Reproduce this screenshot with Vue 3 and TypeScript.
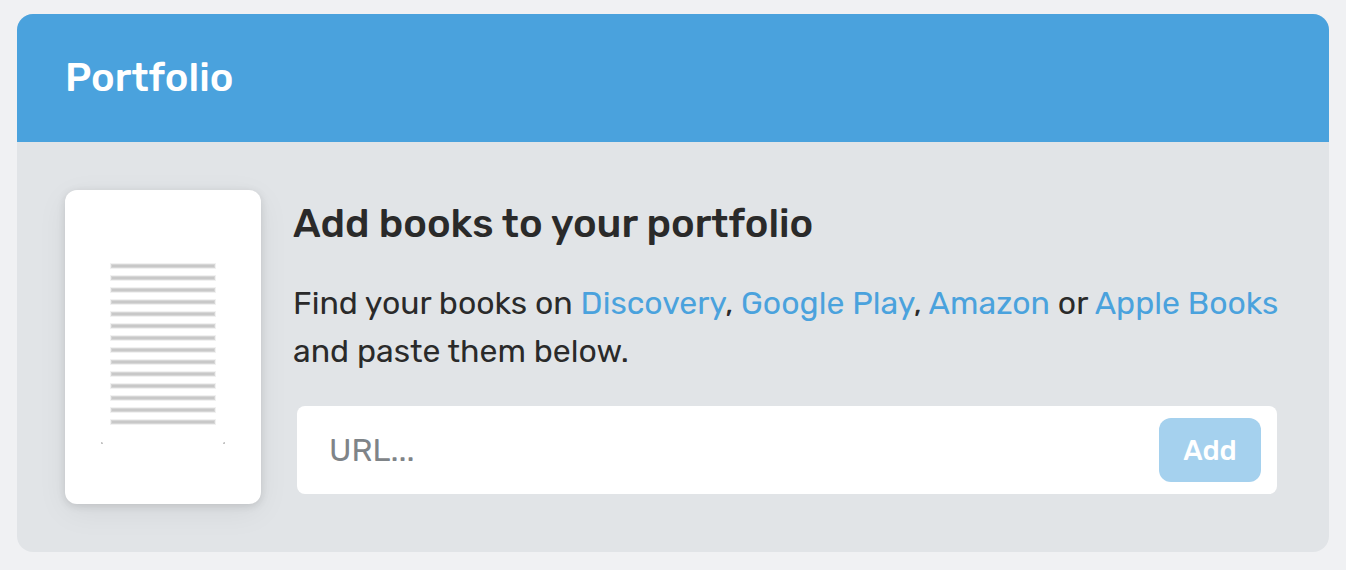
<script setup lang="ts">
import { ref } from 'vue'

const url = ref('')
const lines = Array.from({ length: 14 }, (_, i) => 74 + i * 12)
</script>

<template>
  <main class="page">
    <section class="card">
      <header class="card-header"><h1>Portfolio</h1></header>
      <div class="card-body">
        <svg class="book" viewBox="0 0 196 314" aria-hidden="true">
          <g v-for="y in lines" :key="y">
            <rect x="45" :y="y - 1" width="106" height="6" fill="#f1f1f1" />
            <rect x="46" :y="y" width="104" height="4" fill="#d6d6d6" />
            <rect x="47" :y="y + 1" width="102" height="2" fill="#c8c8c8" />
          </g>
          <path d="M36 252h1l1 1v1h-2zM160 252h-1l-1 1v1h2z" fill="#c4c4c4" />
        </svg>
        <div class="content">
          <h2>Add books to your portfolio</h2>
          <p>
            Find your books on <a href="#">Discovery</a>, <a href="#">Google Play</a>,
            <a href="#">Amazon</a> or <a href="#">Apple Books</a> and paste them below.
          </p>
          <form class="url-form" @submit.prevent>
            <input v-model="url" type="text" placeholder="URL..." aria-label="Book URL" />
            <button type="submit">Add</button>
          </form>
        </div>
      </div>
    </section>
  </main>
</template>

<style>
body {
  background: #f0f1f3;
}
</style>

<style scoped>
.page {
  padding: 14px 17px 18px;
  font-family: Rubik, Roboto, "Liberation Sans", sans-serif;
  color: #2a2a2a;
}
.card {
  border-radius: 16px;
  overflow: hidden;
  background: #e1e4e7;
}
.card-header {
  padding: 40px 48px;
  background: #4aa2dd;
  color: #fff;
}
h1,
h2 {
  margin: 0;
  font-size: 40px;
  line-height: 48px;
  font-weight: 500;
}
.card-body {
  display: flex;
  align-items: flex-start;
  gap: 32px;
  padding: 48px;
}
.book {
  flex: none;
  width: 196px;
  height: 314px;
  border-radius: 12px;
  background: #fff;
  box-shadow: 0 2px 8px rgba(0, 0, 0, 0.12), 0 8px 32px rgba(0, 0, 0, 0.06);
}
.content {
  flex: 1;
  min-width: 0;
  padding-top: 10px;
}
p {
  margin: 31px 0;
  font-size: 32px;
  line-height: 48px;
}
a {
  color: #4aa2dd;
  text-decoration: none;
}
.url-form {
  display: flex;
  align-items: center;
  margin: 0 4px;
  padding: 12px 16px 12px 32px;
  border-radius: 8px;
  background: #fff;
}
input {
  flex: 1;
  min-width: 0;
  height: 64px;
  padding: 0;
  border: 0;
  outline: 0;
  background: none;
  font: inherit;
  font-size: 32px;
  color: inherit;
}
input::placeholder {
  color: #7f8488;
  opacity: 1;
}
button {
  width: 102px;
  height: 64px;
  padding: 0;
  border: 0;
  border-radius: 12px;
  background: #a5d1ee;
  color: #fff;
  font: inherit;
  font-size: 28px;
  font-weight: 500;
}
</style>
